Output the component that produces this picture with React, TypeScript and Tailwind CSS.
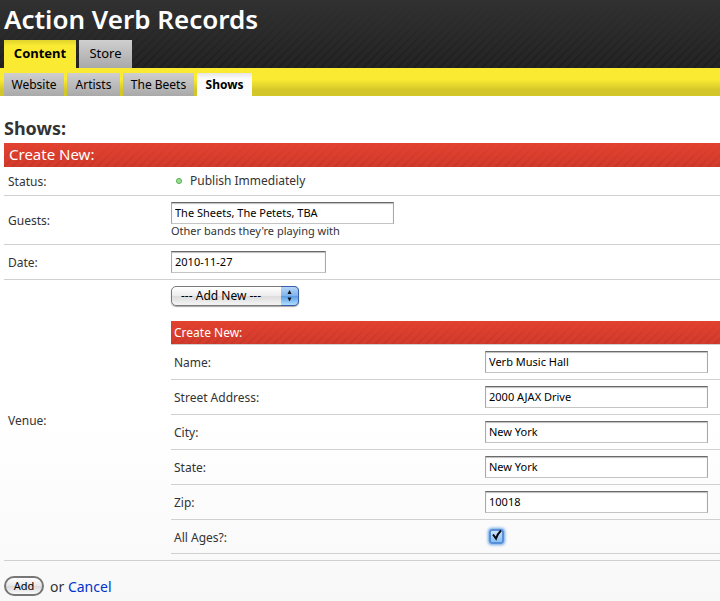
import { useState } from "react";
import type { ReactNode } from "react";

const topTabs = ["Content", "Store"];
const subTabs = [
  { name: "Website", width: "w-[60px]" },
  { name: "Artists", width: "w-[53px]" },
  { name: "The Beets", width: "w-[71px]" },
  { name: "Shows", width: "w-[55px]" },
];

const venueFields = [
  { id: "name", label: "Name:", value: "Verb Music Hall" },
  { id: "street", label: "Street Address:", value: "2000 AJAX Drive" },
  { id: "city", label: "City:", value: "New York" },
  { id: "state", label: "State:", value: "New York" },
  { id: "zip", label: "Zip:", value: "10018" },
];

const redBar =
  "bg-[linear-gradient(to_bottom,rgba(228,66,48,0.95),rgba(210,58,44,0.5)),repeating-linear-gradient(135deg,#d23c2c_0px,#d23c2c_3px,#b52f22_5px,#d23c2c_6px)] text-white";

function TextBox({ id, value, narrow }: { id: string; value: string; narrow?: boolean }) {
  return (
    <input
      id={id}
      type="text"
      defaultValue={value}
      className={
        "block h-[22px] border border-[#a8a8a8] border-t-[#6a6a6a] border-b-[#c4c4c4] bg-white px-[3px] pb-px text-[11px] leading-4 text-black shadow-[inset_0_1px_1px_#bdbdbd] outline-none " +
        (narrow ? "w-[155px]" : "w-[223px]")
      }
    />
  );
}

function Row({ id, label, height, children }: { id?: string; label: string; height: string; children: ReactNode }) {
  return (
    <div className={"flex items-center border-b border-[#d0d0d0] " + height}>
      <label htmlFor={id} className="w-[167px] shrink-0 pt-[2px] pl-1 text-[12px]">
        {label}
      </label>
      <div className="min-w-0 grow">{children}</div>
    </div>
  );
}

function VenueRow({ id, label, height, children }: { id: string; label: string; height: string; children: ReactNode }) {
  return (
    <div className={"flex items-center border-b border-[#d0d0d0] " + height}>
      <label htmlFor={id} className="grow pt-[2px] pl-[3px] text-[12px]">
        {label}
      </label>
      <div className="w-[235px] shrink-0">{children}</div>
    </div>
  );
}

export default function App() {
  const [allAges, setAllAges] = useState(true);
  return (
    <div className="min-h-screen bg-[linear-gradient(to_bottom,#ffffff_70%,#f8f8f8_100%)] font-['Noto_Sans','Open_Sans',sans-serif] text-[#333333]">
      <header className="bg-[linear-gradient(to_bottom,rgba(49,49,49,1),rgba(34,34,34,0.5)),repeating-linear-gradient(135deg,#262626_0px,#262626_3px,#151515_5px,#262626_6px)] pl-1">
        <h1 className="h-10 text-[26px] leading-[38px] font-semibold text-white">Action Verb Records</h1>
        <nav className="flex gap-[3px] text-[13px]">
          {topTabs.map((tab, i) => (
            <a
              key={tab}
              href="#"
              className={
                "flex h-7 items-center justify-center text-black " +
                (i === 0
                  ? "w-[72px] bg-[linear-gradient(to_bottom,#e0d22c,#faeb32_6px)] font-bold"
                  : "w-[53px] bg-linear-to-b from-[#cfcfcf] to-[#a9a9a9]")
              }
            >
              {tab}
            </a>
          ))}
        </nav>
      </header>
      <nav className="flex h-7 items-end gap-[3px] bg-[linear-gradient(to_bottom,#faeb32_40%,#d3c628_80%)] pl-1 text-[12px]">
        {subTabs.map(({ name, width }) => (
          <a
            key={name}
            href="#"
            className={
              "flex h-[23px] items-center justify-center whitespace-nowrap text-black " +
              width +
              (name === "Shows"
                ? " bg-[linear-gradient(to_bottom,#e6e6e6,#fcfcfc_6px)] font-bold"
                : " bg-linear-to-b from-[#cfcfcf] to-[#a9a9a9]")
            }
          >
            {name}
          </a>
        ))}
      </nav>

      <main className="pl-1">
        <h2 className="mt-5 mb-[3px] text-[18px] leading-6 font-bold">Shows:</h2>
        <form onSubmit={(e) => e.preventDefault()}>
          <h3 className={"h-6 pl-[5px] text-[15px] leading-[23px] " + redBar}>Create New:</h3>
          <Row label="Status:" height="h-[29px]">
            <span className="flex items-center pl-[5px] text-[12px]">
              <span className="mr-2 size-[6px] rounded-full border border-[#4fae4f] bg-[#9be08f]" />
              Publish Immediately
            </span>
          </Row>
          <Row id="guests" label="Guests:" height="h-[49px]">
            <TextBox id="guests" value="The Sheets, The Petets, TBA" />
            <p className="text-[11px] leading-[14px]">Other bands they're playing with</p>
          </Row>
          <Row id="date" label="Date:" height="h-[35px]">
            <TextBox id="date" value="2010-11-27" narrow />
          </Row>
          <Row id="venue" label="Venue:" height="pt-[6px] pb-[6px]">
            <div className="relative w-32">
              <select
                id="venue"
                className="block h-5 w-32 appearance-none rounded-[5px] border border-[#7a7a7a] bg-[linear-gradient(to_bottom,#ffffff,#ececec_50%,#dcdcdc_51%,#f4f4f4)] pl-[9px] text-[12px] leading-4 text-black shadow-[0_1px_1px_rgba(0,0,0,0.35)] outline-none"
              >
                <option>--- Add New ---</option>
              </select>
              <svg className="pointer-events-none absolute top-0 right-0" width="18" height="20" viewBox="0 0 18 20">
                <defs>
                  <linearGradient id="aqua" x1="0" y1="0" x2="0" y2="1">
                    <stop offset="0" stopColor="#b9d8f6" />
                    <stop offset="0.5" stopColor="#7db2ec" />
                    <stop offset="0.52" stopColor="#5b9ee6" />
                    <stop offset="1" stopColor="#b4e2ff" />
                  </linearGradient>
                </defs>
                <path d="M0 .5H13Q17.500 .5 17.500 5V15Q17.500 19.500 13 19.500H0Z" fill="url(#aqua)" />
                <path d="M0 .5H13Q17.500 .5 17.500 5V15Q17.500 19.500 13 19.500H0" fill="none" stroke="#3a5fa8" />
                <path d="M6.500 8 8.500 4 10.500 8ZM6.500 11.500 8.500 15.500 10.500 11.500Z" fill="#111" />
              </svg>
            </div>
            <fieldset className="mt-[15px]">
              <legend className={"block h-6 w-full border-b border-[#d0d0d0] pl-[3px] text-[12px] leading-[23px] " + redBar}>
                Create New:
              </legend>
              {venueFields.map((f) => (
                <VenueRow key={f.id} id={f.id} label={f.label} height="h-[35px]">
                  <TextBox id={f.id} value={f.value} />
                </VenueRow>
              ))}
              <VenueRow id="ages" label="All Ages?:" height="h-[34px]">
                <span className="relative ml-1 block size-[15px]">
                  <input
                    id="ages"
                    type="checkbox"
                    checked={allAges}
                    onChange={(e) => setAllAges(e.target.checked)}
                    className="block size-[15px] appearance-none rounded-[3px] border-2 border-[#5790d6] bg-linear-to-b from-[#cfe2f7] to-[#86c0f4] shadow-[0_0_3px_1px_#6aa5e6] outline-none"
                  />
                  {allAges && (
                    <svg className="pointer-events-none absolute -top-[2px] left-0" width="16" height="16" viewBox="0 0 16 16">
                      <path d="M4 7.500 7 11.500Q8.500 7 12 3.500" fill="none" stroke="#0a0a14" strokeWidth="2" />
                    </svg>
                  )}
                </span>
              </VenueRow>
            </fieldset>
          </Row>
          <div className="flex h-10 items-center gap-[6px] pt-[10px] text-[14px]">
            <button
              type="submit"
              className="h-5 w-10 rounded-full border-2 border-[#777777] bg-[linear-gradient(to_bottom,#ffffff,#e6e6e6_50%,#d8d8d8_51%,#fafafa)] text-[11px] leading-4 text-black"
            >
              Add
            </button>
            <span>
              or{" "}
              <a href="#" className="text-[#0033cc]">
                Cancel
              </a>
            </span>
          </div>
        </form>
      </main>
    </div>
  );
}
